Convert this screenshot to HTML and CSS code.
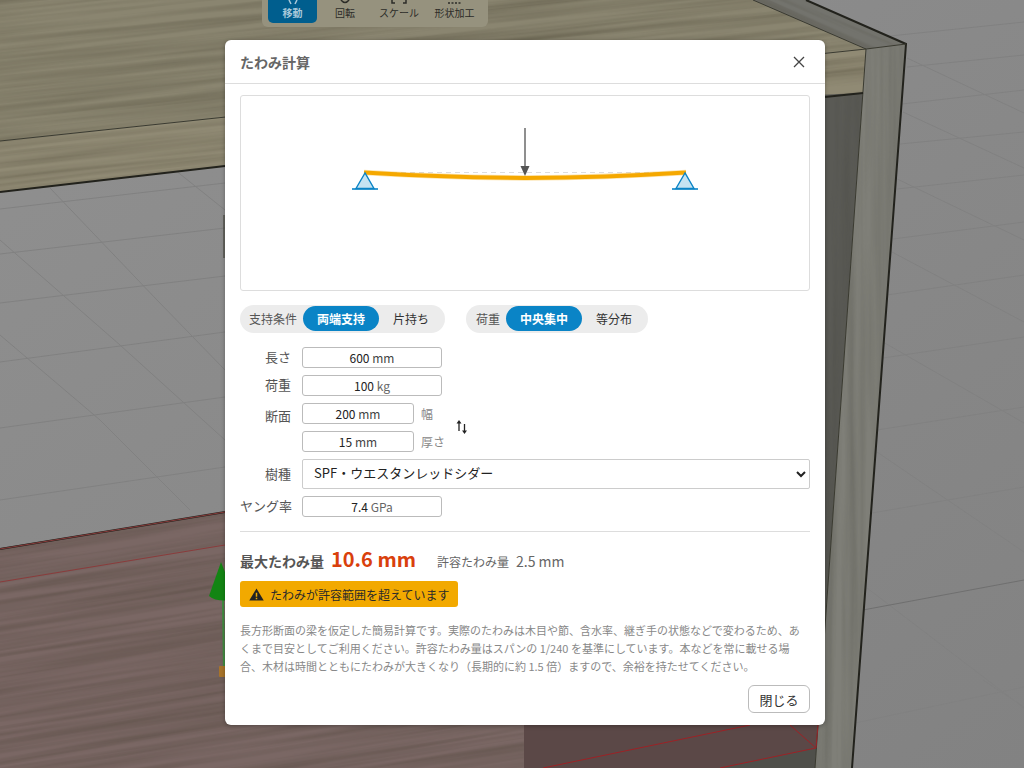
FILE: index.html
```html
<!doctype html>
<html lang="ja">
<head>
	<meta charset="UTF-8">
	<title>たわみ計算</title>
	<link rel="stylesheet" href="styles.css">
</head>
<body>
	<!-- 3D view behind the dialog -->
	<svg class="scene" viewBox="0 0 1024 768" width="1024" height="768">
		<defs>
			<linearGradient id="floor" x1="0" y1="0" x2="1" y2="1">
				<stop offset="0" stop-color="#909090"/>
				<stop offset="1" stop-color="#828282"/>
			</linearGradient>
			<filter id="grainH" x="0" y="0" width="100%" height="100%" color-interpolation-filters="sRGB">
				<feTurbulence type="fractalNoise" baseFrequency="0.003 0.16" numOctaves="3" seed="4"/>
				<feColorMatrix values="0 0 0 0 0.2  0 0 0 0 0.18  0 0 0 0 0.12  0.5 0 0 0 -0.17"/>
				<feComposite in2="SourceAlpha" operator="in" result="g"/>
				<feMerge><feMergeNode in="SourceGraphic"/><feMergeNode in="g"/></feMerge>
			</filter>
			<filter id="grainV" x="0" y="0" width="100%" height="100%" color-interpolation-filters="sRGB">
				<feTurbulence type="fractalNoise" baseFrequency="0.09 0.003" numOctaves="3" seed="9"/>
				<feColorMatrix values="0 0 0 0 0.25  0 0 0 0 0.25  0 0 0 0 0.22  0.5 0 0 0 -0.17"/>
				<feComposite in2="SourceAlpha" operator="in" result="g"/>
				<feMerge><feMergeNode in="SourceGraphic"/><feMergeNode in="g"/></feMerge>
			</filter>
			<clipPath id="topFace"><polygon points="0,0 753,0 866,49 0,141"/></clipPath>
			<clipPath id="edgeFace"><polygon points="0,141 866,49 863,93 0,192"/></clipPath>
			<clipPath id="redFace"><polygon points="0,548 225,512 524,470 524,768 0,768"/></clipPath>
			<clipPath id="sideFace"><polygon points="866,49 906,44 852,768 815,768"/></clipPath>
			<clipPath id="sideTop"><polygon points="753,0 806,0 906,44 866,49"/></clipPath>
			<clipPath id="backFace"><polygon points="700,100 863,93 815,768 700,768"/></clipPath>
		</defs>

		<rect width="1024" height="768" fill="url(#floor)"/>

		<g class="grid">
			<path d="M0 209L225 183M0 254L225 228M0 303L225 276M0 362L225 332M0 428L225 397M0 500L225 467"/>
			<path d="M50 188L157 300L225 370M175 170L225 210M0 240L120 345L225 440M0 335L100 420L190 510"/>
			<path d="M890 36L1024 22M907 67L1024 55M902 104L1024 90M900 144L1024 132M897 189L1024 175M893 239L1024 222M887 295L1024 275"/>
			<path d="M883 358L1024 337M877 430L1024 407M872 513L1024 487M855 723L1024 687"/>
			<path d="M907 58L1024 113M903 112L1024 168M893 177L1024 240M892 252L1024 322M883 342L1024 423M877 452L1024 552M867 588L1024 708M983 680L1024 707"/>
			<path class="grid-dark" d="M863 610L1024 580"/>
		</g>
		<path d="M224 215V258" class="edge"/>

		<g clip-path="url(#topFace)"><g transform="rotate(-6.1 0 141)"><rect x="-30" y="-120" width="1000" height="300" fill="#8a8570" filter="url(#grainH)"/></g></g>
		<g clip-path="url(#edgeFace)"><g transform="rotate(-6.4 0 192)"><rect x="-30" y="100" width="1000" height="110" fill="#908a74" filter="url(#grainH)"/></g></g>
		<g clip-path="url(#backFace)"><rect x="700" y="90" width="170" height="680" fill="#5a5a55" filter="url(#grainV)"/></g>

		<g clip-path="url(#redFace)"><g transform="rotate(-9 0 548)"><rect x="-120" y="400" width="800" height="520" fill="#7a6764" filter="url(#grainH)"/></g></g>
		<polygon points="524,725 830,725 816,748 720,768 524,768" fill="#5b4847"/>
		<polygon points="720,768 816,748 815,768" fill="#4f4f4a"/>
		<g clip-path="url(#sideFace)"><rect x="800" y="40" width="110" height="730" fill="#7f7f78" filter="url(#grainV)"/></g>
		<g clip-path="url(#sideTop)"><g transform="rotate(24 806 0)"><rect x="730" y="-60" width="200" height="120" fill="#73736d" filter="url(#grainH)"/></g></g>

		<path class="edge" d="M0 141L866 49M866 49L815 768"/>
		<path class="edge-bold" d="M0 192L225 166M825 97L863 93M806 0L906 44L852 768M0 549L225 512"/>
		<path class="edge" d="M753 0L866 49L906 44"/>
		<path class="red" d="M0 549L225 512M0 582L225 545"/>
		<path class="red-strong" d="M543 768L750 725M720 768L816 748L818 725M790 725L816 748"/>

		<!-- y axis gizmo, partly behind the dialog -->
		<path d="M223 600L224 668" class="gizmo-stem"/>
		<path d="M221 562L209 596Q216 602 232 600L232 590Z" fill="#138513"/>
		<rect x="219" y="666" width="10" height="11" rx="1" fill="#a8742a"/>
	</svg>

	<div class="toolbar">
		<div class="tool active">
			<svg class="tool-icon" viewBox="0 0 20 5"><path d="M6 0L8 4M14 0L12 4"/></svg>
			<span>移動</span>
		</div>
		<div class="tool">
			<svg class="tool-icon" viewBox="0 0 20 5"><path d="M6 0Q10 5 14 0"/></svg>
			<span>回転</span>
		</div>
		<div class="tool">
			<svg class="tool-icon" viewBox="0 0 20 5"><path d="M3 0V3H6M17 0V3H14"/></svg>
			<span>スケール</span>
		</div>
		<div class="tool">
			<svg class="tool-icon" viewBox="0 0 20 5"><path d="M3 3H17" stroke-dasharray="2 1.500"/></svg>
			<span>形状加工</span>
		</div>
	</div>

	<div class="overlay">
		<div class="dialog">
			<div class="dialog-head">
				<h2>たわみ計算</h2>
				<svg class="close-x" viewBox="0 0 12 12" width="12" height="12"><path d="M1 1L11 11M11 1L1 11"/></svg>
			</div>
			<div class="dialog-body">
				<div class="diagram">
					<svg viewBox="0 0 568 194" width="568" height="194">
						<path d="M124 76.500H444" class="rest-line"/>
						<path d="M123 76.500Q204 81.500 284 82Q364 81.500 445 76.500" class="beam-halo"/>
						<path d="M123 76.500Q204 81.500 284 82Q364 81.500 445 76.500" class="beam"/>
						<path d="M284 32V71" class="load-line"/>
						<polygon points="279.500,70 288.500,70 284,80" class="load-head"/>
						<polygon points="124,77 115,92.500 133,92.500" class="support"/>
						<path d="M111 93H137" class="support-base"/>
						<polygon points="444,77 435,92.500 453,92.500" class="support"/>
						<path d="M431 93H457" class="support-base"/>
					</svg>
				</div>

				<div class="switches">
					<div class="seg">
						<span class="seg-label">支持条件</span>
						<span class="seg-btn on">両端支持</span>
						<span class="seg-btn">片持ち</span>
					</div>
					<div class="seg load">
						<span class="seg-label">荷重</span>
						<span class="seg-btn on">中央集中</span>
						<span class="seg-btn">等分布</span>
					</div>
				</div>

				<div class="form">
					<div class="row">
						<label>長さ</label>
						<div class="field">600 <span>mm</span></div>
					</div>
					<div class="row">
						<label>荷重</label>
						<div class="field">100 <span class="unit">kg</span></div>
					</div>
					<div class="section">
						<label>断面</label>
						<div class="section-fields">
							<div class="row">
								<div class="field small">200 <span>mm</span></div>
								<em>幅</em>
							</div>
							<div class="row">
								<div class="field small">15 <span>mm</span></div>
								<em>厚さ</em>
							</div>
						</div>
						<svg class="swap" viewBox="0 0 12 14" width="12" height="14">
							<path d="M3 3V11M8.500 4V11"/>
							<polygon points="0.500,3.500 5.500,3.500 3,0"/>
							<polygon points="6,10.500 11,10.500 8.500,14"/>
						</svg>
					</div>
					<div class="row">
						<label>樹種</label>
						<select class="wood">
							<option>SPF・ウエスタンレッドシダー</option>
						</select>
					</div>
					<div class="row">
						<label>ヤング率</label>
						<div class="field">7.4 <span class="unit">GPa</span></div>
					</div>
				</div>

				<div class="result">
					<b class="result-label">最大たわみ量</b>
					<b class="result-value">10.6 mm</b>
					<span class="limit-label">許容たわみ量</span>
					<span class="limit-value">2.5 mm</span>
				</div>

				<div class="warning">
					<svg viewBox="0 0 16 14" width="15" height="13"><path d="M8 0.500L15.800 13.500H0.200Z" fill="#222"/><path d="M7.200 5H8.800V9.500H7.200ZM7.200 10.500H8.800V12H7.200Z" fill="#f2a900"/></svg>
					<span>たわみが許容範囲を超えています</span>
				</div>

				<p class="note">長方形断面の梁を仮定した簡易計算です。実際のたわみは木目や節、含水率、継ぎ手の状態などで変わるため、あくまで目安としてご利用ください。許容たわみ量はスパンの 1/240 を基準にしています。本などを常に載せる場合、木材は時間とともにたわみが大きくなり（長期的に約 1.5 倍）ますので、余裕を持たせてください。</p>

				<div class="foot">
					<button class="close-btn">閉じる</button>
				</div>
			</div>
		</div>
	</div>
</body>
</html>
```

FILE: styles.css
```css
*{margin: 0;padding: 0;box-sizing: border-box;}
html,body{width: 1024px;height: 768px;overflow: hidden;}
body{font-family: "Noto Sans CJK JP","Noto Sans",sans-serif;background: #8c8c8c;color: #333;}

/* scene */
.scene{position: absolute;left: 0;top: 0;display: block;}
.grid path{fill: none;stroke: #818181;stroke-width: 1;}
.grid .grid-dark{stroke: #6f6f6f;}
.edge{fill: none;stroke: #3a3a30;stroke-width: 1;}
.edge-bold{fill: none;stroke: #22221c;stroke-width: 2;}
.red{fill: none;stroke: #8a3c3c;stroke-width: 1;}
.red-strong{fill: none;stroke: #9c2226;stroke-width: 1;}
.gizmo-stem{fill: none;stroke: #3f8f3f;stroke-width: 2;}

/* toolbar */
.toolbar{position: absolute;left: 262px;top: 0;width: 226px;height: 27px;padding: 0 6px;display: flex;gap: 3.5px;background: #96927e;border-radius: 0 0 6px 6px;}
.tool{min-width: 49px;height: 23px;padding: 0 6px;display: flex;flex-direction: column;align-items: center;font-size: 10px;line-height: 14px;color: #2c2c28;border-radius: 0 0 5px 5px;}
.tool-icon{width: 20px;height: 5px;margin-bottom: 1px;fill: none;stroke: #2c2c28;stroke-width: 1.5;}
.tool.active{background: #005e8e;color: #a9c9da;font-weight: 700;}
.tool.active .tool-icon{stroke: #a9c9da;}

/* dialog */
.overlay{position: absolute;left: 0;top: 0;width: 100%;height: 100%;display: flex;align-items: flex-start;padding: 40px 0 0 225px;}
.dialog{width: 600px;height: 685px;background: #fff;border-radius: 6px;box-shadow: 0 1px 4px rgba(0,0,0,.3);}
.dialog-head{height: 44px;padding: 0 20px 0 15px;display: flex;align-items: center;justify-content: space-between;border-bottom: 1px solid #ddd;}
.dialog-head h2{font-size: 14px;font-weight: 700;color: #666;}
.close-x{fill: none;stroke: #444;stroke-width: 1.3;}
.dialog-body{padding: 11px 15px 0;}

.diagram{height: 196px;border: 1px solid #ddd;border-radius: 3px;}
.diagram svg{display: block;}
.rest-line{fill: none;stroke: #ddd;stroke-width: 1;stroke-dasharray: 5 4;}
.beam{fill: none;stroke: #f5a800;stroke-width: 4;}
.beam-halo{fill: none;stroke: #f5a800;stroke-width: 5.5;opacity: .3;}
.load-line{fill: none;stroke: #6a6a6a;stroke-width: 1.5;}
.load-head{fill: #555;}
.support{fill: #c6e3f2;stroke: #0a84c6;stroke-width: 1.4;}
.support-base{fill: none;stroke: #0a84c6;stroke-width: 1.6;}

.switches{margin-top: 14px;display: flex;gap: 21px;}
.seg{height: 28px;padding: 1px 2px 0 9px;display: flex;align-items: flex-start;background: #ececec;border-radius: 14px;}
.seg.load{padding-left: 10px;}
.seg-label{margin-right: 6px;font-size: 12px;line-height: 26px;color: #555;}
.seg-btn{height: 25px;padding: 0 14px;font-size: 12px;line-height: 26px;color: #333;border-radius: 13px;}
.seg-btn.on{background: #0a84c6;color: #fff;font-weight: 700;}

.form{margin-top: 14px;display: flex;flex-direction: column;gap: 7px;}
.row{display: flex;align-items: center;gap: 11px;}
.form label{width: 51px;height: 21px;flex: none;text-align: right;font-size: 13px;line-height: 19px;color: #555;white-space: nowrap;}
.field{width: 140px;height: 21px;border: 1px solid #bbb;border-radius: 3px;text-align: center;font-size: 12px;line-height: 20px;color: #222;}
.field span{color: #444;}
.field .unit{color: #666;}
.field.small{width: 112px;}
.row em{margin-left: -4px;font-style: normal;font-size: 12px;color: #888;}
.section{display: flex;align-items: flex-start;gap: 11px;}
.section label{height: 26px;line-height: 26px;}
.section-fields{display: flex;flex-direction: column;gap: 7px;width: 143px;}
.swap{margin-top: 17px;fill: #222;stroke: #222;stroke-width: 1.3;}
.swap polygon{stroke: none;}
.wood{flex: 1;height: 30px;padding: 0 7px 3px;border: 1px solid #ccc;border-radius: 2px;background: #fff;font-family: inherit;font-size: 13px;color: #222;}

.result{margin-top: 14px;padding-top: 12px;border-top: 1px solid #ddd;display: flex;align-items: baseline;height: 47px;}
.result-label{font-size: 14px;color: #555;}
.result-value{margin-left: 7px;font-size: 20px;color: #d9400c;}
.limit-label{margin-left: 21px;font-size: 12px;color: #666;}
.limit-value{margin-left: 7px;font-size: 14px;color: #666;}

.warning{margin-top: 3px;width: 218px;height: 26px;padding-left: 9px;display: flex;align-items: center;gap: 6px;background: #f2a900;border-radius: 3px;font-size: 12px;color: #2a2a2a;}

.note{margin-top: 14px;font-size: 11px;line-height: 18px;color: #888;}

.foot{margin-top: 10px;display: flex;justify-content: flex-end;}
.close-btn{width: 62px;height: 28px;border: 1px solid #bbb;border-radius: 6px;background: #fff;font-family: inherit;font-size: 13px;color: #333;}
```
